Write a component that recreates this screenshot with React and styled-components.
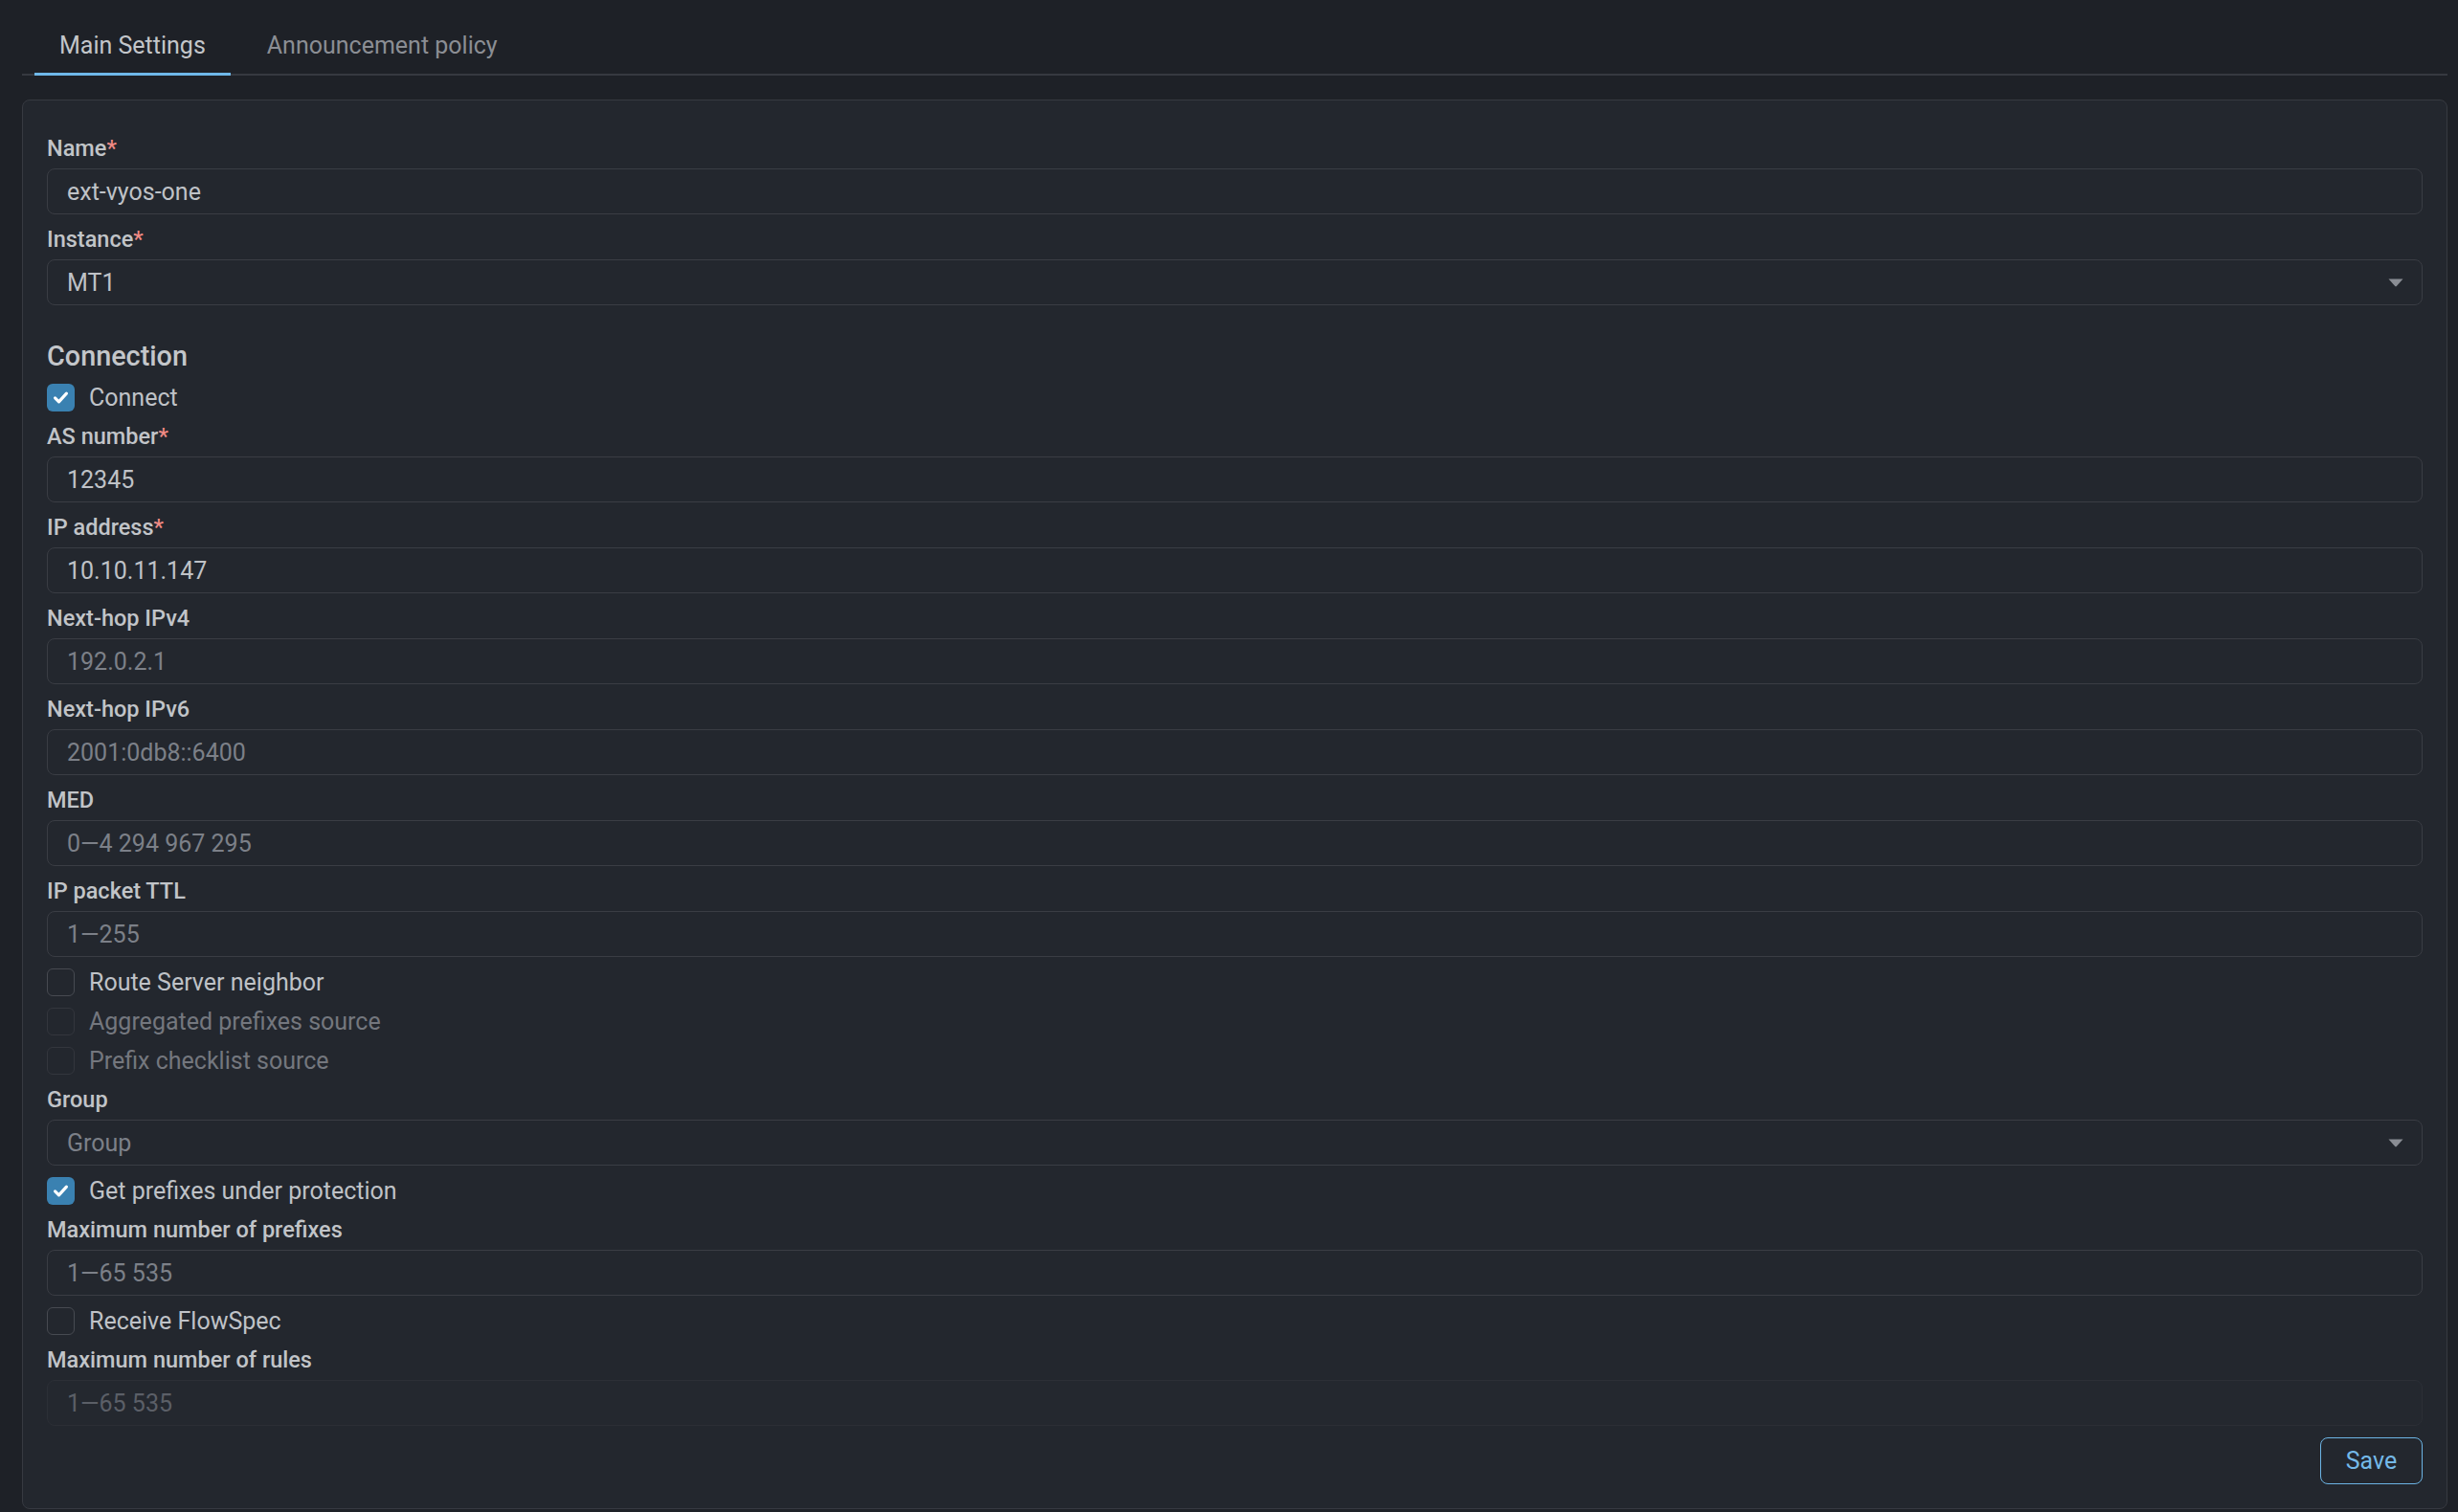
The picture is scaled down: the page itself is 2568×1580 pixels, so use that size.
import React, { useState } from "react";
import styled, { createGlobalStyle } from "styled-components";

const GlobalStyle = createGlobalStyle`
  html, body {
    margin: 0;
    padding: 0;
    background: #1e2127;
    font-family: Roboto, "Noto Sans", "Liberation Sans", sans-serif;
  }
`;

const Page = styled.div`
  min-height: 1580px;
  box-sizing: border-box;
  padding: 18px 11px 0 23px;
  background: #1e2127;
`;

const TabList = styled.div`
  display: flex;
  gap: 12px;
  padding-left: 13px;
  border-bottom: 2px solid #363940;
`;

const Tab = styled.button`
  background: none;
  border: none;
  border-bottom: 3px solid ${({ active }) => (active ? "#6fb8e9" : "transparent")};
  margin-bottom: -2px;
  padding: 15px 26px 13px;
  font-family: inherit;
  font-size: 25px;
  line-height: 30px;
  color: ${({ active }) => (active ? "#c3c6ca" : "#8b8e94")};
  cursor: pointer;
`;

const Panel = styled.div`
  margin-top: 25px;
  background: #23272e;
  border: 1px solid #373a41;
  border-radius: 8px;
  padding: 36px 25px 25px;
  display: flex;
  flex-direction: column;
  gap: 12px;
`;

const Field = styled.div`
  display: flex;
  flex-direction: column;
`;

const Label = styled.label`
  font-size: 23.5px;
  line-height: 28px;
  font-weight: 500;
  color: #c1c4c8;
  margin-bottom: 7px;
`;

const Required = styled.span`
  color: #f08a84;
`;

const InputBox = styled.div`
  position: relative;
  height: 48px;
  box-sizing: border-box;
  border: 1px solid ${({ disabled }) => (disabled ? "#2c2f36" : "#3a3d44")};
  border-radius: 8px;
  background: ${({ disabled }) => (disabled ? "#24282f" : "#23272e")};
  display: flex;
  align-items: center;
  padding: 0 20px;
  font-size: 25px;
  color: ${({ tone }) =>
    tone === "value" ? "#bfc2c7" : tone === "muted" ? "#5b5f67" : "#7c8088"};
`;

const Arrow = styled.svg`
  position: absolute;
  right: 19px;
  top: 50%;
  margin-top: -4px;
`;

const Heading = styled.h4`
  margin: 24px 0 0;
  font-size: 28.8px;
  line-height: 34px;
  font-weight: 500;
  color: #c3c6ca;
`;

const CheckRow = styled.label`
  display: flex;
  align-items: center;
  gap: 15px;
  height: 29px;
  font-size: 25px;
  color: ${({ disabled }) => (disabled ? "#74777e" : "#bfc2c7")};
`;

const Box = styled.span`
  width: 29px;
  height: 29px;
  box-sizing: border-box;
  border-radius: 6px;
  flex: none;
  display: flex;
  align-items: center;
  justify-content: center;
  background: ${({ checked }) => (checked ? "#3a81b1" : "transparent")};
  border: ${({ checked, disabled }) =>
    checked ? "none" : `1.5px solid ${disabled ? "#33363d" : "#474a51"}`};
`;

const Footer = styled.div`
  display: flex;
  justify-content: flex-end;
`;

const SaveButton = styled.button`
  height: 49px;
  width: 107px;
  background: transparent;
  border: 1.5px solid #6cb4e4;
  border-radius: 8px;
  color: #74b9e8;
  font-family: inherit;
  font-size: 25px;
  cursor: pointer;
`;

const TextField = ({ label, required, value, placeholder, disabled, select }) => (
  <Field>
    <Label>
      {label}
      {required && <Required>*</Required>}
    </Label>
    <InputBox disabled={disabled} tone={value ? "value" : disabled ? "muted" : "placeholder"}>
      {value || placeholder}
      {select && (
        <Arrow width="16" height="9" viewBox="0 0 16 9">
          <path d="M0.5 0.5 H15.5 L8.8 8 Q8 8.8 7.2 8 Z" fill="#8a8d94" />
        </Arrow>
      )}
    </InputBox>
  </Field>
);

const Checkbox = ({ label, checked, disabled }) => (
  <CheckRow disabled={disabled}>
    <Box checked={checked} disabled={disabled}>
      {checked && (
        <svg width="19" height="19" viewBox="0 0 24 24">
          <path
            d="M4.5 12.5l5 5L19.5 6.5"
            fill="none"
            stroke="#fff"
            strokeWidth="4"
            strokeLinecap="round"
            strokeLinejoin="round"
          />
        </svg>
      )}
    </Box>
    {label}
  </CheckRow>
);

export default function App() {
  const [tab, setTab] = useState("main");

  return (
    <Page>
      <GlobalStyle />
      <TabList>
        <Tab active={tab === "main"} onClick={() => setTab("main")}>
          Main Settings
        </Tab>
        <Tab active={tab === "policy"} onClick={() => setTab("policy")}>
          Announcement policy
        </Tab>
      </TabList>

      <Panel>
        <TextField label="Name" required value="ext-vyos-one" />
        <TextField label="Instance" required value="MT1" select />

        <Heading>Connection</Heading>
        <Checkbox label="Connect" checked />
        <TextField label="AS number" required value="12345" />
        <TextField label="IP address" required value="10.10.11.147" />
        <TextField label="Next-hop IPv4" placeholder="192.0.2.1" />
        <TextField label="Next-hop IPv6" placeholder="2001:0db8::6400" />
        <TextField label="MED" placeholder="0—4 294 967 295" />
        <TextField label="IP packet TTL" placeholder="1—255" />

        <Checkbox label="Route Server neighbor" />
        <Checkbox label="Aggregated prefixes source" disabled />
        <Checkbox label="Prefix checklist source" disabled />

        <TextField label="Group" placeholder="Group" select />
        <Checkbox label="Get prefixes under protection" checked />
        <TextField label="Maximum number of prefixes" placeholder="1—65 535" />
        <Checkbox label="Receive FlowSpec" />
        <TextField label="Maximum number of rules" placeholder="1—65 535" disabled />

        <Footer>
          <SaveButton>Save</SaveButton>
        </Footer>
      </Panel>
    </Page>
  );
}
